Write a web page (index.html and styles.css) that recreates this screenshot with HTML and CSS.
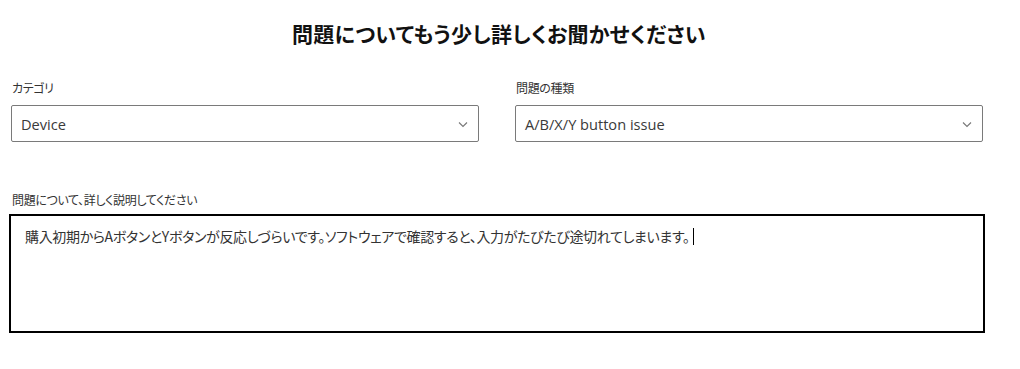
FILE: index.html
```html
<!DOCTYPE html>
<html lang="ja">
<head>
  <meta charset="UTF-8">
  <title>問題の詳細</title>
  <link rel="stylesheet" href="styles.css">
</head>
<body>
  <h1 class="titulo">問題についてもう少し詳しくお聞かせください</h1>

  <div class="campos">
    <div class="campo">
      <div class="rotulo">カテゴリ</div>
      <div class="seletor">
        <span>Device</span>
        <svg class="seta" width="10" height="7" viewBox="0 0 10 7"><path d="M1 1.5 L5 5.5 L9 1.5" fill="none" stroke="#777" stroke-width="1.1"/></svg>
      </div>
    </div>
    <div class="campo">
      <div class="rotulo">問題の種類</div>
      <div class="seletor">
        <span>A/B/X/Y button issue</span>
        <svg class="seta" width="10" height="7" viewBox="0 0 10 7"><path d="M1 1.5 L5 5.5 L9 1.5" fill="none" stroke="#777" stroke-width="1.1"/></svg>
      </div>
    </div>
  </div>

  <div class="descricao">
    <div class="rotulo">問題について、詳しく説明してください</div>
    <div class="caixa">購入初期からAボタンとYボタンが反応しづらいです。ソフトウェアで確認すると、入力がたびたび途切れてしまいます。<span class="cursor"></span></div>
  </div>
</body>
</html>
```

FILE: styles.css
```css
body {
  margin: 0;
  font-family: "Open Sans", "Noto Sans CJK JP", sans-serif;
  background-color: #fff;
  color: #222;
  font-feature-settings: "palt";
}

.titulo {
  margin: 0;
  padding: 19px 22px 0 0;
  text-align: center;
  font-family: "Noto Sans CJK JP", sans-serif;
  font-size: 21px;
  line-height: 28px;
  font-weight: 700;
  color: #111;
  letter-spacing: 0.3px;
}

.campos {
  display: grid;
  grid-template-columns: 468px 468px;
  column-gap: 36px;
  padding-left: 11px;
  margin-top: 33px;
}

.rotulo {
  font-family: "Noto Sans CJK JP", sans-serif;
  font-size: 12px;
  line-height: 16px;
  color: #333;
  padding-left: 1px;
  margin-bottom: 9px;
  letter-spacing: -0.35px;
}

.seletor {
  display: flex;
  align-items: center;
  justify-content: space-between;
  height: 35px;
  border: 1px solid #7a7a7a;
  border-radius: 2px;
  padding: 0 10px 0 9px;
  font-size: 14.6px;
  color: #3a3a3a;
}

.seta {
  display: block;
  margin-top: 2px;
}

.descricao {
  margin-top: 50px;
  padding-left: 11px;
}

.descricao .rotulo {
  margin-bottom: 6px;
}

.caixa {
  margin-left: -2px;
  width: 972px;
  height: 105px;
  padding-top: 10px;
  border: 2px solid #000;
  font-family: "Noto Sans CJK JP", sans-serif;
  font-size: 14px;
  line-height: 20px;
  color: #333;
  text-indent: 14px;
  letter-spacing: -0.35px;
}

.cursor {
  display: inline-block;
  width: 1px;
  height: 17px;
  background: #000;
  vertical-align: -3px;
  margin-left: 3px;
}
```
